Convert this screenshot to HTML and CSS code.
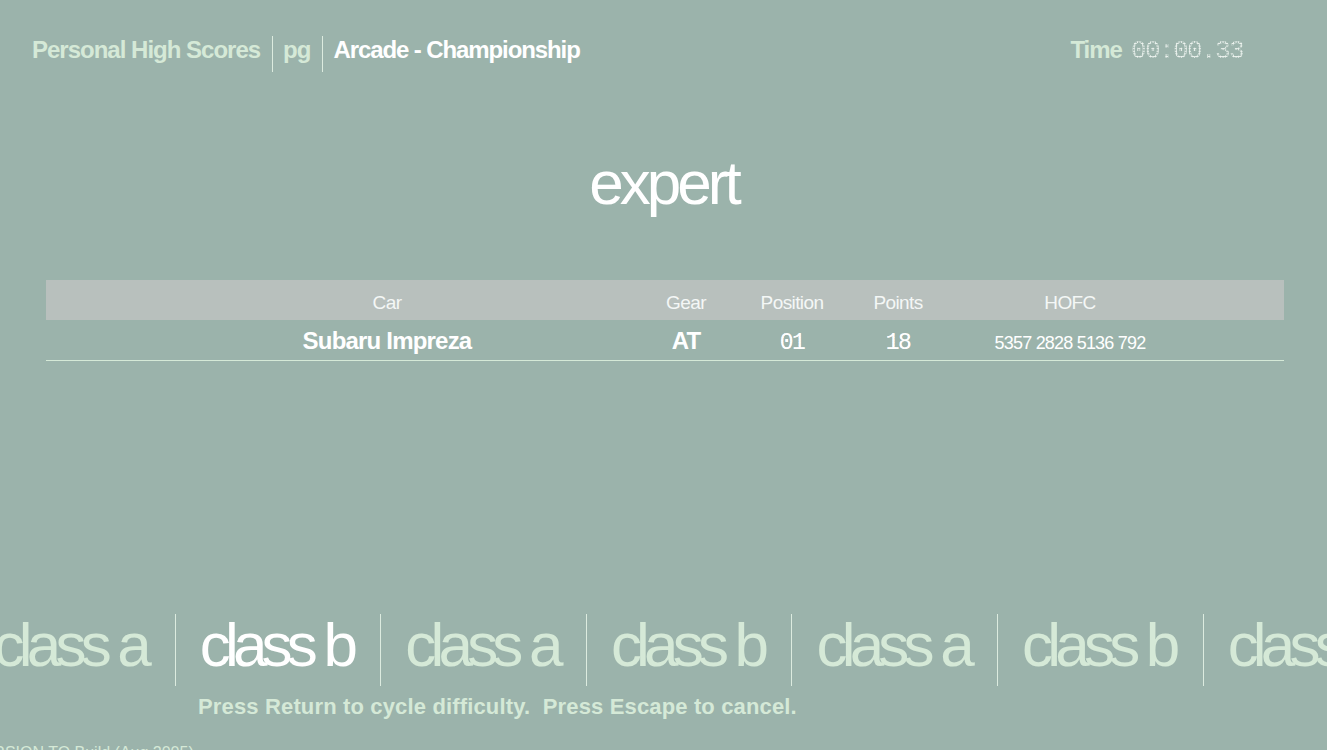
FILE: index.html
```html
<!DOCTYPE html>
<html>
<head>
<meta charset="utf-8">
<link rel="stylesheet" href="styles.css">
</head>
<body>
<div class="screen">
  <header class="top">
    <div class="crumbs">
      <span class="crumb crumb-first">Personal High Scores</span>
      <span class="crumb">pg</span>
      <span class="crumb crumb-active">Arcade - Championship</span>
    </div>
    <div class="time">
      <span class="time-label">Time</span>
      <span class="dots time-value">00:00.33</span>
    </div>
  </header>

  <h1 class="title">expert</h1>

  <div class="table">
    <div class="trow thead">
      <span class="pad"></span>
      <span class="cell">Car</span>
      <span class="cell">Gear</span>
      <span class="cell">Position</span>
      <span class="cell">Points</span>
      <span class="cell">HOFC</span>
      <span class="pad"></span>
    </div>
    <div class="trow tbody">
      <span class="pad"></span>
      <span class="cell bold">Subaru Impreza</span>
      <span class="cell bold">AT</span>
      <span class="cell dots num">01</span>
      <span class="cell dots num">18</span>
      <span class="cell code">5357 2828 5136 792</span>
      <span class="pad"></span>
    </div>
  </div>

  <div class="carousel">
    <div class="chip chip-first">class a</div>
    <div class="chip chip-selected">class b</div>
    <div class="chip">class a</div>
    <div class="chip">class b</div>
    <div class="chip">class a</div>
    <div class="chip">class b</div>
    <div class="chip">class a</div>
  </div>

  <p class="hint">Press Return to cycle difficulty.&nbsp; Press Escape to cancel.</p>

  <p class="version">VERSION TO Build (Aug 2005)</p>
</div>
</body>
</html>
```

FILE: styles.css
```css
html, body {
  margin: 0;
  padding: 0;
}

body {
  background: #9bb3ab;
  font-family: "Liberation Sans", Arial, sans-serif;
  color: #d5e9d7;
}

.screen {
  width: 1327px;
  height: 750px;
  overflow: hidden;
}

.top {
  display: flex;
  justify-content: space-between;
  align-items: flex-start;
  padding: 36px 84px 0 32px;
}

.crumbs {
  display: flex;
}

.crumb {
  font-size: 24px;
  font-weight: bold;
  letter-spacing: -1px;
  line-height: 28px;
  padding: 0 12px 8px 10px;
  border-left: 1px solid #dcebdf;
  color: #d5e9d7;
}

.crumb-first {
  border-left: none;
  padding-left: 0;
}

.crumb-active {
  color: #ffffff;
  letter-spacing: -1.1px;
}

.time {
  display: flex;
  align-items: baseline;
  gap: 9px;
  line-height: 28px;
}

.time-label {
  font-size: 24px;
  font-weight: bold;
  letter-spacing: -1px;
}

.dots {
  font-family: "Liberation Mono", "DejaVu Sans Mono", monospace;
  background-image: radial-gradient(circle, #eef4f0 0.85px, rgba(238, 244, 240, 0.25) 1.1px, rgba(238, 244, 240, 0) 1.4px);
  background-size: 2.6px 2.6px;
  -webkit-background-clip: text;
  background-clip: text;
  color: transparent;
}

.time-value {
  font-size: 26px;
  letter-spacing: -1.6px;
}

.title {
  margin: 80px 0 0;
  text-align: center;
  font-size: 62px;
  line-height: 62px;
  font-weight: normal;
  letter-spacing: -4px;
  color: #ffffff;
}

.table {
  margin: 66px 43px 0 46px;
}

.trow {
  display: grid;
  grid-template-columns: 90px 502px 96px 116px 96px 248px 1fr;
  align-items: baseline;
}

.thead {
  background: #b8c0bd;
  height: 40px;
  box-sizing: border-box;
  padding-top: 12px;
}

.thead .cell {
  font-size: 19px;
  line-height: 22px;
  letter-spacing: -0.6px;
  color: #f4f7f6;
  text-align: center;
}

.tbody {
  height: 41px;
  box-sizing: border-box;
  padding-top: 9px;
  border-bottom: 1px solid #d5e9d7;
}

.tbody .cell {
  text-align: center;
  color: #ffffff;
  line-height: 24px;
}

.bold {
  font-size: 24px;
  font-weight: bold;
  letter-spacing: -0.8px;
}

.num {
  font-size: 23px;
  letter-spacing: -1.5px;
}

.code {
  font-size: 18px;
  letter-spacing: -0.8px;
  padding-top: 2px;
}

.carousel {
  display: flex;
  margin-top: 253px;
  margin-left: -31px;
}

.chip {
  flex: 0 0 auto;
  width: 205.6px;
  height: 72px;
  box-sizing: border-box;
  border-left: 1px solid #dcebdf;
  padding-right: 4px;
  text-align: center;
  font-size: 62px;
  line-height: 62px;
  letter-spacing: -5.8px;
  color: #d5e9d7;
  white-space: nowrap;
}

.chip-first {
  border-left: none;
}

.chip-selected {
  color: #ffffff;
}

.hint {
  margin: 9px 0 0 198px;
  font-size: 22px;
  line-height: 24px;
  font-weight: bold;
  letter-spacing: 0.15px;
  color: #d5e9d7;
}

.version {
  margin: 25px 0 0 -28px;
  font-size: 16px;
  line-height: 18px;
  color: #d5e9d7;
  white-space: nowrap;
}
```
